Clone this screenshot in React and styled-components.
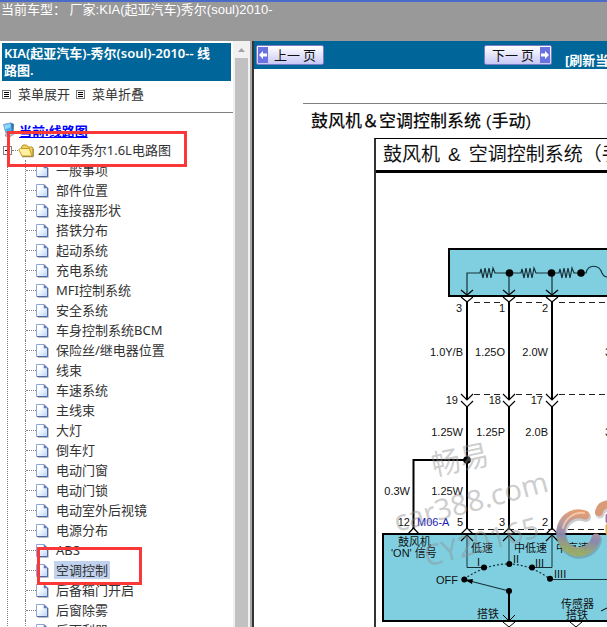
import React, { useState } from 'react';
import styled, { createGlobalStyle } from 'styled-components';

const GlobalStyle = createGlobalStyle`
  * {
    box-sizing: border-box;
  }

  body {
    margin: 0;
    background-color: #ffffff;
    font-family: "Noto Sans", "Noto Sans CJK SC", sans-serif;
    font-size: 13px;
    color: #333333;
  }
`;

const Page = styled.div`
  display: flex;
  flex-direction: column;
  height: 100vh;
  overflow: hidden;
`;

const TopBar = styled.header`
  flex: none;
  height: 41px;
  padding-left: 1px;
  border-top: 2px solid #4a6cc8;
  background-color: #999999;
  color: #ffffff;
  font-family: "Liberation Sans", "Noto Sans CJK SC", sans-serif;
  font-size: 13px;
  line-height: 15px;
  white-space: nowrap;
`;

const Frames = styled.div`
  display: flex;
  flex: 1;
  min-height: 0;
`;

const Sidebar = styled.aside`
  display: flex;
  flex: none;
  width: 250px;
`;

const SidebarContent = styled.div`
  flex: 1;
  min-width: 0;
  overflow: hidden;
`;

const SidebarTitle = styled.h1`
  margin: 2px 2px 0;
  padding: 2px 12px 2px 2px;
  background-color: #006699;
  color: #ffffff;
  font-size: 13px;
  font-weight: 600;
  line-height: 17px;
`;

const MenuActions = styled.div`
  display: flex;
  gap: 6px;
  height: 32px;
  padding: 4px 2px;
  border-bottom: 1px solid #808080;
`;

const MenuButton = styled.button`
  display: flex;
  align-items: center;
  gap: 7px;
  height: 18px;
  padding: 0;
  border: 0;
  background: none;
  color: #333333;
  font: inherit;
  line-height: 18px;
`;

const Tree = styled.nav`
  padding-top: 7px;
  white-space: nowrap;
`;

const TreeRoot = styled.a`
  display: flex;
  align-items: center;
  gap: 3px;
  height: 20px;
  padding-left: 2px;
  color: #0000ff;
  font-weight: 700;
  text-decoration: none;

  span {
    text-decoration: underline;
  }
`;

const FolderRow = styled.div`
  position: relative;
  display: flex;
  align-items: center;
  height: 20px;
  padding-left: 3px;
`;

const ToggleButton = styled.button`
  display: flex;
  padding: 0;
  border: 0;
  background: none;
`;

const DottedLine = styled.span`
  width: ${(props) => props.$width}px;
  border-top: 1px dotted #808080;
`;

const FolderLabel = styled.a`
  margin-left: 4px;
  color: #333333;
  line-height: 20px;
  text-decoration: none;
`;

const TreeList = styled.ul`
  margin: 0 0 0 7px;
  padding: 0 0 0 17px;
  border-left: 1px dotted #808080;
  list-style: none;
`;

const TreeItem = styled.li`
  position: relative;
  display: flex;
  align-items: center;
  height: 20px;
  border-left: 1px dotted #808080;
`;

const TreeLink = styled.a`
  margin-left: 5px;
  padding: 0 2px;
  background-color: ${(props) => (props.$selected ? '#c1d2ee' : 'transparent')};
  color: #333333;
  line-height: 18px;
  text-decoration: none;
`;

const Highlight = styled.span`
  position: absolute;
  top: ${(props) => props.$top}px;
  left: ${(props) => props.$left}px;
  z-index: 1;
  width: ${(props) => props.$width}px;
  height: ${(props) => props.$height}px;
  border: 3px solid #fb3838;
  pointer-events: none;
`;

const ScrollTrack = styled.div`
  display: flex;
  flex: none;
  flex-direction: column;
  align-items: center;
  width: 17px;
  background-color: #f1f1f1;
`;

const ScrollArrow = styled.svg`
  flex: none;
  width: 17px;
  height: 17px;
`;

const ScrollThumb = styled.div`
  flex: 1;
  width: 13px;
  background-color: #c1c1c1;
`;

const Divider = styled.div`
  flex: none;
  width: 4px;
  border-left: 2px solid #a8a8a8;
  background-color: #333333;
`;

const Main = styled.main`
  flex: 1;
  min-width: 0;
  overflow: hidden;
  background-color: #ffffff;
`;

const Toolbar = styled.div`
  display: flex;
  align-items: center;
  height: 28px;
  padding-left: 2px;
  background-color: #006699;
  white-space: nowrap;
`;

const PageButton = styled.button`
  display: flex;
  flex: none;
  align-items: center;
  width: 68px;
  height: 20px;
  margin-right: ${(props) => props.$gap}px;
  padding: 1px;
  border: 1px solid #7b7bc6;
  border-radius: 2px;
  background: linear-gradient(#ffffff, #c8c8f6);
  color: #111111;
  font-family: "Noto Sans CJK SC", sans-serif;
  font-size: 13px;
  line-height: 16px;
`;

const PageButtonLabel = styled.span`
  flex: 1;
  text-align: center;
`;

const ArrowBox = styled.svg`
  flex: none;
  width: 10px;
  height: 16px;
`;

const RefreshLink = styled.a`
  align-self: flex-end;
  color: #ffffff;
  font-size: 13px;
  font-weight: 700;
  line-height: 18px;
  text-decoration: none;
`;

const Article = styled.article`
  margin-top: 34px;
  margin-left: 49px;
  border-top: 1px solid #808080;
  color: #111111;
  white-space: nowrap;
`;

const ArticleTitle = styled.h2`
  margin: 0;
  padding: 5px 0 4px 8px;
  font-family: "Liberation Sans", "Noto Sans CJK SC", sans-serif;
  font-size: 17px;
  font-weight: 500;
  line-height: 25px;
`;

const DiagramFrame = styled.section`
  margin-left: 71px;
  border-top: 1px solid #000000;
  border-left: 2px solid #333333;
  overflow: hidden;
`;

const DiagramTitle = styled.h3`
  display: flex;
  gap: 8px;
  height: 34px;
  margin: 0;
  padding-left: 7px;
  border-bottom: 3px solid #000000;
  font-family: "Liberation Sans", "Noto Sans CJK SC", sans-serif;
  font-size: 19px;
  font-weight: 400;
  line-height: 32px;
`;

const Circuit = styled.svg`
  display: block;
  font-family: "Liberation Sans", "Noto Sans CJK SC", sans-serif;
  font-size: 11px;
`;

const items = [
  '一般事项',
  '部件位置',
  '连接器形状',
  '搭铁分布',
  '起动系统',
  '充电系统',
  'MFI控制系统',
  '安全系统',
  '车身控制系统BCM',
  '保险丝/继电器位置',
  '线束',
  '车速系统',
  '主线束',
  '大灯',
  '倒车灯',
  '电动门窗',
  '电动门锁',
  '电动室外后视镜',
  '电源分布',
  'ABS',
  '空调控制',
  '后备箱门开启',
  '后窗除雾',
  '后雨刮器',
];

const wires = [467, 509, 552];

const labels = [
  { x: 462, y: 312, text: '3' },
  { x: 505, y: 312, text: '1' },
  { x: 548, y: 312, text: '2' },
  { x: 463, y: 356, text: '1.0Y/B' },
  { x: 505, y: 356, text: '1.25O' },
  { x: 548, y: 356, text: '2.0W' },
  { x: 458, y: 404, text: '19' },
  { x: 501, y: 404, text: '18' },
  { x: 543, y: 404, text: '17' },
  { x: 463, y: 436, text: '1.25W' },
  { x: 505, y: 436, text: '1.25P' },
  { x: 548, y: 436, text: '2.0B' },
  { x: 410, y: 495, text: '0.3W' },
  { x: 463, y: 495, text: '1.25W' },
  { x: 410, y: 526, text: '12' },
  { x: 463, y: 526, text: '5' },
  { x: 505, y: 526, text: '3' },
  { x: 548, y: 526, text: '2' },
];

const MenuIcon = () => (
  <svg width="9" height="9" viewBox="0 0 9 9" aria-hidden="true">
    <rect x="0.5" y="0.5" width="8" height="8" fill="#fff" stroke="#777" />
    <path d="M2 2.5h5M2 4.5h5M2 6.5h5" stroke="#000" />
  </svg>
);

const ComputerIcon = () => (
  <svg width="14" height="16" viewBox="0 0 14 16" aria-hidden="true">
    <path d="M1.5 2.5 9 .8l1.4 8.7-6.5 1.8z" fill="#48b2ee" stroke="#8aa9c5" />
    <path d="M2.5 3.3 8.2 2l.5 3.2-5.6 2z" fill="#8ed9ff" />
    <path d="m9 .8 3 1.2-.5 10-1.9-1z" fill="#3d76ac" />
    <path d="m4 12 5-1.3 2.6 1.8-4 2.4L3 14z" fill="#b9c7d4" stroke="#7890a8" strokeWidth=".7" />
  </svg>
);

const FolderIcon = () => (
  <svg width="16" height="16" viewBox="0 0 16 16" aria-hidden="true">
    <path d="M3.5 7V5l1.5-2h3.5l1.5 2h4l1 1v8h-11z" fill="#efd05c" stroke="#b99322" />
    <path d="M.8 7.5 2.5 6.5h9l2.3 7.5H4z" fill="#ffef9f" stroke="#c79c27" />
    <path d="M4 14.8h11.3V7" fill="none" stroke="#806b32" strokeWidth=".7" />
  </svg>
);

const FileIcon = () => (
  <svg width="13" height="16" viewBox="0 0 13 16" aria-hidden="true">
    <defs>
      <linearGradient id="paper" x1="0" y1="0" x2="1" y2="1">
        <stop offset="0.3" stopColor="#ffffff" />
        <stop offset="1" stopColor="#b9d3fa" />
      </linearGradient>
    </defs>
    <path d="M2 15.5h10.3V6" fill="none" stroke="#bbb" />
    <path d="M.5 2.5H8l3.5 3.5v8.5H.5z" fill="url(#paper)" stroke="#8ea6dc" />
    <path d="M11.5 6v8.5H1" fill="none" stroke="#5468a8" />
    <path d="M8 2.5 11.5 6H8z" fill="#6078b8" stroke="#6078b8" strokeWidth=".5" />
  </svg>
);

const PageArrow = ({ flip }) => (
  <ArrowBox viewBox="0 0 10 16" aria-hidden="true">
    <rect width="10" height="16" fill="#6a72e0" />
    <path
      d="M1 8 5 4v2.5h4v3H5V12z"
      fill="#fff"
      transform={flip ? 'rotate(180 5 8)' : undefined}
    />
  </ArrowBox>
);

const CircuitDiagram = () => (
  <Circuit width="400" height="480" viewBox="376 173 400 480" role="img" aria-label="鼓风机 & 空调控制系统">
    <defs>
      <linearGradient id="ring" x1="0.7" y1="0" x2="0.5" y2="1">
        <stop offset="0" stopColor="#e39a6c" />
        <stop offset="0.35" stopColor="#b8989c" />
        <stop offset="0.65" stopColor="#8c86ae" />
        <stop offset="1" stopColor="#9cac68" />
      </linearGradient>
    </defs>

    <g fill="#7fcfe1" stroke="#000" strokeWidth="2">
      <rect x="449" y="249" width="340" height="47" />
      <rect x="383" y="534" width="400" height="87" />
    </g>

    {/* resistor row */}
    <g fill="none" stroke="#173038" strokeWidth="1.2">
      <path d="M467 295V273H480l1-4 2 9 2-10 2 10 2-10 2 10 2-10 2 5h26l1-4 2 9 2-10 2 10 2-10 2 10 2-10 2 5h23l1-4 2 9 2-10 2 10 2-10 2 10 2-10 2 5h12c2-9 13-9 16 0 2 4 4 4 7 4" />
      <path d="M509 273V295M552 273V295" />
    </g>
    <circle cx="509.5" cy="273" r="3.8" />
    <circle cx="551.5" cy="273" r="3.8" />
    <circle cx="581" cy="273" r="3.8" />

    {/* wires and connectors */}
    {wires.map((x) => (
      <g key={x} fill="none" stroke="#000">
        <path d={`M${x} 302V399M${x} 407V529`} strokeWidth="2" />
        <path
          d={`M${x - 6} 290l6 5 6-5M${x - 6} 297l6 5 6-5M${x - 6} 394l6 6 6-6M${x - 6} 401l6 6 6-6`}
          strokeWidth="1.2"
        />
        <path d={`M${x - 6} 534l6-6 6 6M${x - 6} 541l6-6 6 6`} strokeWidth="1.2" />
      </g>
    ))}
    <g fill="none" stroke="#222" strokeDasharray="6 4">
      <path d="M474 302.5H502M516 302.5H545M559 302.5H780" />
      <path d="M474 394.5H502M516 394.5H545M559 394.5H780" />
      <path d="M468 529.5H780" />
    </g>
    <path d="M467 460H413.5V529" fill="none" stroke="#000" strokeWidth="2" />
    <path d="m408 534 5.5-6 5.5 6" fill="none" stroke="#000" strokeWidth="1.2" />
    <circle cx="467" cy="460" r="3.8" />

    {/* blower switch */}
    <g fill="none" stroke="#173038">
      <path d="M467 535V567.5H484M509 535V564M552 535V567.5H532M550 579.5H780" />
      <path d="M464 579Q509 549 550 579" strokeDasharray="2 2" strokeWidth="1.2" />
      <path d="M466 580 509 591" strokeWidth="1.2" />
      <path d="m473 579-8 1 7 4z" fill="#000" stroke="none" />
      <path d="M509 591V620" stroke="#000" strokeWidth="2" />
      <path d="m503 615 6 6 6-6M503 622l6 5 6-5M570 622l6 5 6-5" stroke="#000" />
      <path d="M601 611l8-4" stroke="#000" />
    </g>
    <circle cx="464.3" cy="579.5" r="3" />
    <circle cx="484" cy="567.5" r="3" />
    <circle cx="509.3" cy="564" r="3" />
    <circle cx="532" cy="567.5" r="3" />
    <circle cx="550" cy="578.7" r="3" />
    <circle cx="509" cy="591" r="3" />

    <g fill="#111" textAnchor="end">
      {labels.map((label) => (
        <text key={`${label.x}-${label.y}`} x={label.x} y={label.y}>
          {label.text}
        </text>
      ))}
    </g>
    <text x="417" y="526" fill="#1c1cb4">M06-A</text>
    <g fill="#111">
      <text x="605" y="356">3.0L</text>
      <text x="605" y="436">3.0L</text>
      <text x="398" y="546">鼓风机</text>
      <text x="391" y="557">'ON' 信号</text>
      <text x="471" y="552">低速</text>
      <text x="514" y="552">中低速</text>
      <text x="556" y="552">中高速</text>
      <text x="477" y="566">I</text>
      <text x="513" y="563">II</text>
      <text x="535" y="567">III</text>
      <text x="554" y="578">IIII</text>
      <text x="436" y="584">OFF</text>
      <text x="477" y="618">搭铁</text>
      <text x="561" y="608">传感器</text>
      <text x="566" y="619">搭铁</text>
    </g>

    {/* coloured logo */}
    <g fill="none" strokeLinecap="round">
      <path d="M585 515A18 19 0 1 0 596 538" stroke="#5f6673" strokeWidth="10" opacity="0.35" transform="translate(1 2)" />
      <path d="M585 515A18 19 0 1 0 596 538" stroke="url(#ring)" strokeWidth="9" opacity="0.95" />
      <path d="M584 513A19 20 0 0 0 563 528" stroke="#ffd9bc" strokeWidth="2" opacity="0.7" />
      <path d="M599 512c1-5 5-8 12-8" stroke="#5f6673" strokeWidth="9" opacity="0.3" transform="translate(1 2)" />
      <path d="M599 512c1-5 5-8 12-8" stroke="#d99a78" strokeWidth="8" />
      <path d="M608 526v7" stroke="#d2b53c" strokeWidth="5" />
      <path d="M608 516v5" stroke="#9674a8" strokeWidth="5" />
    </g>

    {/* watermark */}
    <g fill="#8f8f8f" fillOpacity="0.45" fontFamily='"Noto Sans", "Noto Sans CJK SC", sans-serif'>
      <text fontSize="29" transform="translate(434 476) rotate(-12)">畅易</text>
      <text fontSize="29" transform="translate(397 532) rotate(-15)">car388.com</text>
      <text fontSize="29" transform="translate(427 567) rotate(-15)">CY20165</text>
    </g>
  </Circuit>
);

const App = () => {
  const [open, setOpen] = useState(true);
  const [selected, setSelected] = useState('空调控制');

  return (
    <Page>
      <GlobalStyle />
      <TopBar>当前车型： 厂家:KIA(起亚汽车)秀尔(soul)2010-</TopBar>
      <Frames>
        <Sidebar>
          <SidebarContent>
            <SidebarTitle>KIA(起亚汽车)-秀尔(soul)-2010-- 线路图.</SidebarTitle>
            <MenuActions>
              <MenuButton onClick={() => setOpen(true)}>
                <MenuIcon />
                菜单展开
              </MenuButton>
              <MenuButton onClick={() => setOpen(false)}>
                <MenuIcon />
                菜单折叠
              </MenuButton>
            </MenuActions>
            <Tree>
              <TreeRoot href="#root">
                <ComputerIcon />
                <span>当前:线路图</span>
              </TreeRoot>
              <FolderRow>
                <ToggleButton aria-label="菜单折叠" onClick={() => setOpen(!open)}>
                  <svg width="9" height="9" viewBox="0 0 9 9">
                    <rect x="0.5" y="0.5" width="8" height="8" fill="#fff" stroke="#808080" />
                    <path d={open ? 'M2 4.5h5' : 'M2 4.5h5M4.5 2v5'} stroke="#000" />
                  </svg>
                </ToggleButton>
                <DottedLine $width={6} />
                <FolderIcon />
                <FolderLabel href="#folder">2010年秀尔1.6L电路图</FolderLabel>
                <Highlight $top={-9} $left={7} $width={180} $height={36} />
              </FolderRow>
              {open && (
                <TreeList>
                  {items.map((item) => (
                    <TreeItem key={item}>
                      <DottedLine $width={10} />
                      <FileIcon />
                      <TreeLink
                        href="#item"
                        $selected={item === selected}
                        onClick={() => setSelected(item)}
                      >
                        {item}
                      </TreeLink>
                      {item === selected && (
                        <Highlight $top={-13} $left={11} $width={105} $height={38} />
                      )}
                    </TreeItem>
                  ))}
                </TreeList>
              )}
            </Tree>
          </SidebarContent>
          <ScrollTrack>
            <ScrollArrow viewBox="0 0 17 17" aria-hidden="true">
              <path d="M5 11l3.5-4 3.5 4z" fill="#a3a3a3" />
            </ScrollArrow>
            <ScrollThumb />
          </ScrollTrack>
        </Sidebar>
        <Divider />
        <Main>
          <Toolbar>
            <PageButton $gap={160}>
              <PageArrow />
              <PageButtonLabel>上一 页</PageButtonLabel>
            </PageButton>
            <PageButton $gap={13}>
              <PageButtonLabel>下一 页</PageButtonLabel>
              <PageArrow flip />
            </PageButton>
            <RefreshLink href="#refresh">[刷新当前页]</RefreshLink>
          </Toolbar>
          <Article>
            <ArticleTitle>鼓风机＆空调控制系统 (手动)</ArticleTitle>
            <DiagramFrame>
              <DiagramTitle>
                <span>鼓风机</span>
                <span>&amp;</span>
                <span>空调控制系统（手动）</span>
              </DiagramTitle>
              <CircuitDiagram />
            </DiagramFrame>
          </Article>
        </Main>
      </Frames>
    </Page>
  );
};

export default App;
